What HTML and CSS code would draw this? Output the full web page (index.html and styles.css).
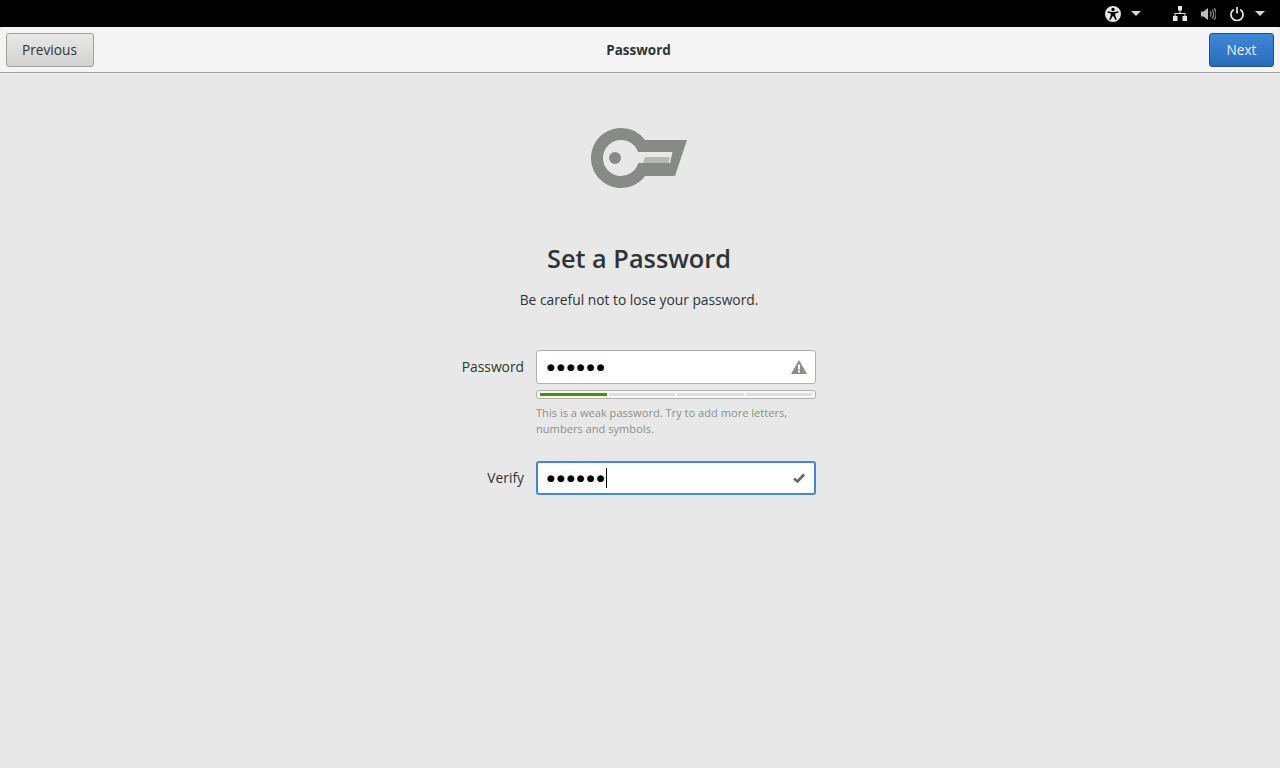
FILE: index.html
```html
<!DOCTYPE html>
<html lang="en">
<head>
    <meta charset="UTF-8">
    <meta name="viewport" content="width=device-width, initial-scale=1.0">
    <title>Password</title>
    <link rel="stylesheet" href="styles.css">
</head>
<body>
    <div class="topbar">
        <svg class="status-icon" width="16" height="16" viewBox="0 0 16 16">
            <path fill="#e6e6e6" fill-rule="evenodd" d="M8 0a8 8 0 1 0 0 16A8 8 0 0 0 8 0zM8 1.800a1.700 1.700 0 1 1 0 3.400 1.700 1.700 0 0 1 0-3.400zM2.800 5.200l3.600.8h3.200l3.600-.8.400 1.300-3.400 1v2l1.600 4-1.300.5L8.500 10.200h-1l-2 3.800-1.300-.5 1.600-4v-2l-3.400-1z"/>
        </svg>
        <span class="caret-down"></span>
        <svg class="status-icon net" width="14" height="15" viewBox="0 0 14 15">
            <path fill="#e6e6e6" d="M5 0h4v4.500H7.500V7H12.500v3H14v5H9.500v-5H11.500V8H2.500v2H4.500v5H0v-5h1.500V7h5V4.500H5z"/>
        </svg>
        <svg class="status-icon vol" width="15" height="14" viewBox="0 0 15 14">
            <path fill="#bdbdbd" d="M0 4.500h2.500L7 1v12L2.500 9.500H0z"/>
            <path fill="none" stroke="#8a8a8a" stroke-width="1.300" d="M9 4.500a3.500 3.500 0 0 1 0 5M11 2.800a6 6 0 0 1 0 8.400M13 1.200a8.500 8.500 0 0 1 0 11.600"/>
        </svg>
        <svg class="status-icon pow" width="14" height="14" viewBox="0 0 14 14">
            <path fill="none" stroke="#e6e6e6" stroke-width="1.700" d="M3.800 2.500a6 6 0 1 0 6.400 0M7 0v6.500"/>
        </svg>
        <span class="caret-down last"></span>
    </div>

    <header class="headerbar">
        <button class="btn">Previous</button>
        <h1 class="page-title">Password</h1>
        <button class="btn btn-next">Next</button>
    </header>

    <main class="content">
        <svg class="key-icon" width="96" height="60" viewBox="0 0 96 60">
            <path fill="#888a87" fill-rule="evenodd" d="M30 0a30 30 0 0 1 24 12H96L84 48H54A30 30 0 1 1 30 0zM30 12a18 18 0 1 0 17.300 23H79L81.500 24H47A18 18 0 0 0 30 12z"/>
            <circle cx="24" cy="30" r="6" fill="#888a87"/>
            <path fill="#b6b8b4" d="M54 29H79L77.500 35H52z"/>
        </svg>
        <h2 class="title">Set a Password</h2>
        <p class="subtitle">Be careful not to lose your password.</p>

        <div class="form">
            <label class="field-label">Password</label>
            <div class="entry">
                <span class="dots">●●●●●●</span>
                <svg width="16" height="14" viewBox="0 0 16 14">
                    <path fill="#8b8d89" fill-rule="evenodd" d="M8 0l8 14H0zM7 4.500v5h2v-5zM7 10.500v2h2v-2z"/>
                </svg>
            </div>
            <div class="strength">
                <div class="strength-bar">
                    <span class="seg"><span class="seg-fill"></span></span>
                    <span class="seg"></span>
                    <span class="seg"></span>
                    <span class="seg"></span>
                </div>
                <p class="hint">This is a weak password. Try to add more letters, numbers and symbols.</p>
            </div>
            <label class="field-label">Verify</label>
            <div class="entry focused">
                <span class="dots">●●●●●●</span><span class="cursor"></span>
                <svg width="12" height="10" viewBox="0 0 12 10">
                    <path fill="none" stroke="#666" stroke-width="2.600" d="M1 5.500l3.500 3L11 1.500"/>
                </svg>
            </div>
        </div>
    </main>
</body>
</html>
```

FILE: styles.css
```css
html, body {
    height: 100%;
}
body {
    margin: 0;
    display: flex;
    flex-direction: column;
    background-color: #e8e8e8;
    color: #2e3436;
    font-family: "Open Sans", "Noto Sans", sans-serif;
    font-size: 13.800px;
    overflow: hidden;
}
.topbar {
    height: 27px;
    flex: none;
    box-sizing: border-box;
    display: flex;
    align-items: center;
    justify-content: flex-end;
    background-color: #000;
    padding-right: 15px;
}
.status-icon {
    display: block;
}
.net {
    margin-left: 32px;
}
.vol {
    margin-left: 14px;
}
.pow {
    margin-left: 14px;
}
.caret-down {
    width: 0;
    height: 0;
    margin-left: 10px;
    border-left: 5px solid transparent;
    border-right: 5px solid transparent;
    border-top: 5px solid #d8d8d8;
}
.caret-down.last {
    margin-left: 11px;
}
.headerbar {
    height: 46px;
    flex: none;
    box-sizing: border-box;
    display: grid;
    grid-template-columns: 1fr auto 1fr;
    align-items: center;
    padding: 0 6px;
    background-color: #f4f4f4;
    border-top-left-radius: 6px;
    border-top-right-radius: 6px;
    border-bottom: 1px solid #9a9a9a;
    box-shadow: 0 1px 0 #f4f4f3;
}
.page-title {
    margin: 0 3px 0 0;
    font-size: 13.500px;
    font-weight: 700;
    color: #2e3436;
}
.btn {
    width: 88px;
    height: 34px;
    padding: 0 1px 0 0;
    font-family: inherit;
    font-size: 13.700px;
    color: #2e3436;
    border: 1px solid #a0a19e;
    border-radius: 3px;
    background: linear-gradient(#e8e8e7, #d2d2d0);
}
.btn-next {
    width: 65px;
    padding: 0;
    justify-self: end;
    color: #e8f1fb;
    border-color: #1c5187;
    background: linear-gradient(#3f87d6, #2a6cbc);
}
.content {
    flex: 1;
    display: flex;
    flex-direction: column;
    align-items: center;
    padding: 55px 2px 0 0;
}
.key-icon {
    display: block;
}
.title {
    margin: 53px 0 0;
    font-size: 25.300px;
    line-height: 34px;
    font-weight: 600;
    color: #2e3436;
}
.subtitle {
    margin: 15px 0 0;
    line-height: 20px;
}
.form {
    margin-top: 40px;
    display: grid;
    grid-template-columns: 62px 280px;
    column-gap: 12px;
    align-items: start;
}
.field-label {
    justify-self: end;
    line-height: 34px;
    white-space: nowrap;
}
.entry {
    height: 34px;
    box-sizing: border-box;
    display: flex;
    align-items: center;
    padding: 0 8px 0 10px;
    background-color: #fff;
    border: 1px solid #b0b1ae;
    border-radius: 3px;
}
.entry svg {
    margin-left: auto;
    display: block;
}
.entry.focused {
    border: 2px solid #4a86c5;
    padding: 0 9px 0 9px;
}
.dots {
    font-family: "DejaVu Sans", sans-serif;
    font-size: 9px;
    letter-spacing: 2.100px;
    color: #000;
    line-height: 1;
}
.cursor {
    width: 1px;
    height: 20px;
    margin-left: -1px;
    background-color: #000;
}
.strength {
    grid-column: 2;
    padding: 6px 0 24px;
}
.strength-bar {
    height: 9px;
    box-sizing: border-box;
    display: flex;
    gap: 2px;
    padding: 2px 3px;
    background-color: #f8f8f7;
    border: 1px solid #b0b1ae;
    border-radius: 3px;
}
.seg {
    flex: 1;
    background-color: #dedede;
}
.seg-fill {
    display: block;
    height: 100%;
    background-color: #478f0c;
}
.hint {
    margin: 6px 0 0;
    font-size: 11.100px;
    line-height: 16px;
    color: #8d8f8b;
}
```
